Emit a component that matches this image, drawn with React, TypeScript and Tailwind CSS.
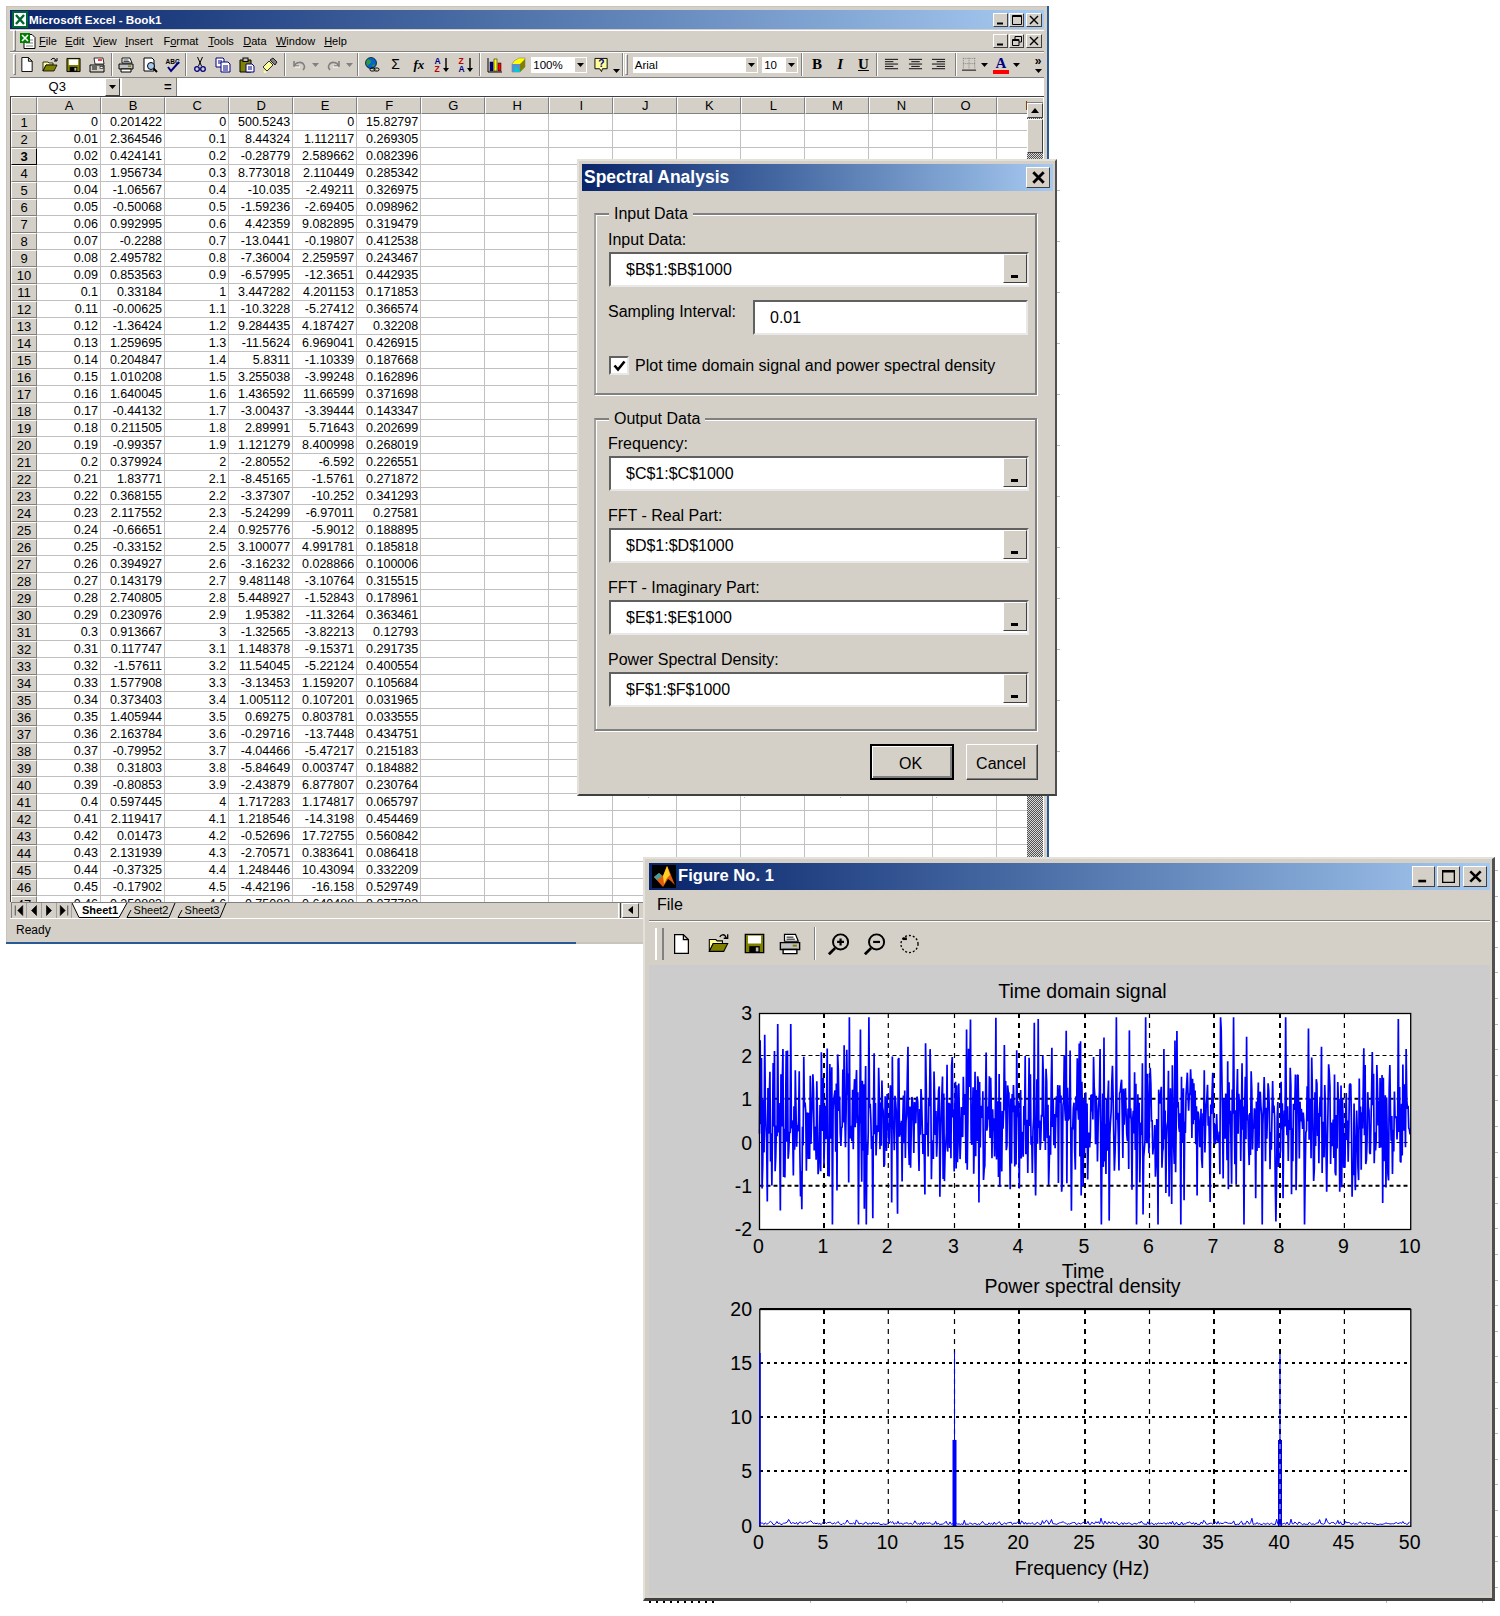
import React from "react";

const ROWS = `0 0.201422 0 500.5243 0 15.82797
0.01 2.364546 0.1 8.44324 1.112117 0.269305
0.02 0.424141 0.2 -0.28779 2.589662 0.082396
0.03 1.956734 0.3 8.773018 2.110449 0.285342
0.04 -1.06567 0.4 -10.035 -2.49211 0.326975
0.05 -0.50068 0.5 -1.59236 -2.69405 0.098962
0.06 0.992995 0.6 4.42359 9.082895 0.319479
0.07 -0.2288 0.7 -13.0441 -0.19807 0.412538
0.08 2.495782 0.8 -7.36004 2.259597 0.243467
0.09 0.853563 0.9 -6.57995 -12.3651 0.442935
0.1 0.33184 1 3.447282 4.201153 0.171853
0.11 -0.00625 1.1 -10.3228 -5.27412 0.366574
0.12 -1.36424 1.2 9.284435 4.187427 0.32208
0.13 1.259695 1.3 -11.5624 6.969041 0.426915
0.14 0.204847 1.4 5.8311 -1.10339 0.187668
0.15 1.010208 1.5 3.255038 -3.99248 0.162896
0.16 1.640045 1.6 1.436592 11.66599 0.371698
0.17 -0.44132 1.7 -3.00437 -3.39444 0.143347
0.18 0.211505 1.8 2.89991 5.71643 0.202699
0.19 -0.99357 1.9 1.121279 8.400998 0.268019
0.2 0.379924 2 -2.80552 -6.592 0.226551
0.21 1.83771 2.1 -8.45165 -1.5761 0.271872
0.22 0.368155 2.2 -3.37307 -10.252 0.341293
0.23 2.117552 2.3 -5.24299 -6.97011 0.27581
0.24 -0.66651 2.4 0.925776 -5.9012 0.188895
0.25 -0.33152 2.5 3.100077 4.991781 0.185818
0.26 0.394927 2.6 -3.16232 0.028866 0.100006
0.27 0.143179 2.7 9.481148 -3.10764 0.315515
0.28 2.740805 2.8 5.448927 -1.52843 0.178961
0.29 0.230976 2.9 1.95382 -11.3264 0.363461
0.3 0.913667 3 -1.32565 -3.82213 0.12793
0.31 0.117747 3.1 1.148378 -9.15371 0.291735
0.32 -1.57611 3.2 11.54045 -5.22124 0.400554
0.33 1.577908 3.3 -3.13453 1.159207 0.105684
0.34 0.373403 3.4 1.005112 0.107201 0.031965
0.35 1.405944 3.5 0.69275 0.803781 0.033555
0.36 2.163784 3.6 -0.29716 -13.7448 0.434751
0.37 -0.79952 3.7 -4.04466 -5.47217 0.215183
0.38 0.31803 3.8 -5.84649 0.003747 0.184882
0.39 -0.80853 3.9 -2.43879 6.877807 0.230764
0.4 0.597445 4 1.717283 1.174817 0.065797
0.41 2.119417 4.1 1.218546 -14.3198 0.454469
0.42 0.01473 4.2 -0.52696 17.72755 0.560842
0.43 2.131939 4.3 -2.70571 0.383641 0.086418
0.44 -0.37325 4.4 1.248446 10.43094 0.332209
0.45 -0.17902 4.5 -4.42196 -16.158 0.529749
0.46 0.250883 4.6 -0.75083 0.640488 0.077783`
  .split("\n")
  .map((r) => r.split(" "));

const COLS = ["A", "B", "C", "D", "E", "F", "G", "H", "I", "J", "K", "L", "M", "N", "O", "P"];

function rng(seed: number) {
  let a = seed;
  return () => {
    a |= 0;
    a = (a + 0x6d2b79f5) | 0;
    let t = Math.imul(a ^ (a >>> 15), 1 | a);
    t = (t + Math.imul(t ^ (t >>> 7), 61 | t)) ^ t;
    return ((t ^ (t >>> 14)) >>> 0) / 4294967296;
  };
}

const r1 = rng(1234);
const gauss = (r: () => number) => Math.sqrt(-2 * Math.log(r() + 1e-9)) * Math.cos(2 * Math.PI * r());
const signal = (() => {
  const pts: string[] = [];
  for (let i = 0; i < 1000; i++) {
    const t = i * 0.01;
    const amp = r1() < 0.55 ? 0.38 : 1.05;
    let v = 0.5 + 0.5 * Math.sin(2 * Math.PI * 15 * t) + 0.5 * Math.sin(2 * Math.PI * 40 * t) + gauss(r1) * amp;
    if (i < 47) v = Number(ROWS[i][1]);
    v = Math.max(-1.9, Math.min(2.9, v));
    pts.push(`${(759.5 + i * 0.6512).toFixed(2)},${(1142.5 - v * 43.2).toFixed(2)}`);
  }
  return pts.join(" ");
})();
const r2 = rng(77);
const psd = (() => {
  const pts: string[] = [];
  for (let i = 0; i < 500; i++) {
    const v = 0.12 + Math.abs(gauss(r2)) * 0.17;
    pts.push(`${(760 + i * 1.3014).toFixed(2)},${(1526 - v * 10.86).toFixed(2)}`);
  }
  return pts.join(" ");
})();

function WinBtn({ className, children }: { className: string; children: React.ReactNode }) {
  return (
    <div className={`flex items-center justify-center bg-[#d4d0c8] border border-t-white border-l-white border-r-[#404040] border-b-[#404040] ${className}`}>
      {children}
    </div>
  );
}
const GMin = ({ s = 10 }: { s?: number }) => (
  <svg width={s} height={s} viewBox="0 0 10 10"><rect x="1" y="7.5" width="6" height="2" fill="#000" /></svg>
);
const GMax = ({ s = 10 }: { s?: number }) => (
  <svg width={s} height={s} viewBox="0 0 10 10"><path d="M0.5 0.5h9v9h-9zM0.5 1.5h9" fill="none" stroke="#000" /></svg>
);
const GRestore = ({ s = 10 }: { s?: number }) => (
  <svg width={s} height={s} viewBox="0 0 10 10"><path d="M3 3V.5h6.5V6H7M.5 3.5H7v6H.5zM.5 4.5H7" fill="none" stroke="#000" /></svg>
);
const GClose = ({ s = 10, w = 1.6 }: { s?: number; w?: number }) => (
  <svg width={s} height={s} viewBox="0 0 10 10"><path d="M1 1l8 8M9 1l-8 8" stroke="#000" strokeWidth={w} /></svg>
);

const I = ({ w = 16, h = 16, vb = "0 0 16 16", children }: { w?: number; h?: number; vb?: string; children: React.ReactNode }) => (
  <svg width={w} height={h} viewBox={vb}>{children}</svg>
);
const IconNew = ({ w = 14, h = 16 }: { w?: number; h?: number }) => (
  <I w={w} h={h} vb="0 0 12 16"><path d="M.5.5h7l4 4v11H.5zM7.5.5v4h4" fill="#fff" stroke="#000" /></I>
);
const IconOpen = ({ w = 16, h = 16 }: { w?: number; h?: number }) => (
  <I w={w} h={h}>
    <path d="M1 5h5l1 1h4v2H4L1 14z" fill="#ffff99" stroke="#000" strokeWidth=".8" />
    <path d="M4 8h11l-3 6H1z" fill="#808000" stroke="#000" strokeWidth=".8" />
    <path d="M9 3c1-2 3-2 4-1l1 2M12 4h3V1" fill="none" stroke="#000" />
  </I>
);
const IconSave = ({ w = 15, h = 16 }: { w?: number; h?: number }) => (
  <I w={w} h={h}>
    <path d="M1 1h14v14H1z" fill="#808000" stroke="#000" />
    <rect x="3" y="2" width="10" height="6" fill="#fff" />
    <rect x="4" y="10" width="8" height="5" fill="#000" />
    <rect x="9" y="11" width="2" height="3" fill="#c0c0c0" />
  </I>
);
const IconMail = () => (
  <I>
    <path d="M5 1h9l1 6H6z" fill="#fff" stroke="#000" strokeWidth=".8" />
    <path d="M9 3h4" stroke="#f00" strokeWidth="1.5" />
    <path d="M1 8h14v7H1z" fill="#d4d0c8" stroke="#000" />
    <path d="M3 10h5M3 12h5" stroke="#000" />
    <rect x="11" y="9.5" width="3" height="2" fill="#fff" stroke="#000" strokeWidth=".6" />
  </I>
);
const IconPrint = ({ w = 16, h = 16 }: { w?: number; h?: number }) => (
  <I w={w} h={h}>
    <path d="M4 1h8l2 5H4z" fill="#fff" stroke="#000" strokeWidth=".9" />
    <path d="M5.5 3h5M5.5 4.5h6" stroke="#000" strokeWidth=".7" />
    <path d="M1 7h14v5H1z" fill="#c0c0c0" stroke="#000" />
    <path d="M3 12h10v3H3z" fill="#fff" stroke="#000" />
    <rect x="10" y="8.5" width="3" height="1.4" fill="#808000" />
  </I>
);
const IconPreview = () => (
  <I>
    <path d="M2 1h8l2 2v11H2z" fill="#fff" stroke="#000" />
    <circle cx="9" cy="9" r="3.5" fill="#a6caf0" stroke="#000" />
    <path d="M11.5 11.5l3.5 3.5" stroke="#000" strokeWidth="2" />
  </I>
);
const IconSpell = () => (
  <I>
    <text x="0.5" y="6.5" fontSize="6.5" fontWeight="700" fill="#000">ABC</text>
    <path d="M3 10l3 4 8-9" fill="none" stroke="#000080" strokeWidth="2" />
  </I>
);
const IconCut = () => (
  <I w={12} h={17} vb="0 0 12 17">
    <path d="M3.5 1l4 9M8.5 1l-4 9" stroke="#000" strokeWidth="1" />
    <circle cx="3" cy="13" r="2.3" fill="none" stroke="#000080" strokeWidth="1.3" />
    <circle cx="9" cy="13" r="2.3" fill="none" stroke="#000080" strokeWidth="1.3" />
  </I>
);
const IconCopy = () => (
  <I>
    <path d="M1 1h7l1 1v8H1z" fill="#fff" stroke="#000080" />
    <path d="M3 4h4M3 6h4" stroke="#000080" />
    <path d="M6 5h7l2 2v8H6z" fill="#fff" stroke="#000080" />
    <path d="M8 9h5M8 11h5M8 13h5" stroke="#000080" />
  </I>
);
const IconPaste = () => (
  <I>
    <path d="M1 3h11v12H1z" fill="#808000" stroke="#000" />
    <rect x="4" y="1" width="5" height="3.5" fill="#c0c0c0" stroke="#000" />
    <path d="M7 7h6l2 2v6H7z" fill="#fff" stroke="#000080" />
    <path d="M9 10h4M9 12h4" stroke="#000080" />
  </I>
);
const IconPainter = () => (
  <I>
    <path d="M1 10l6-6 4 4-6 6z" fill="#ffff99" stroke="#000" strokeWidth=".8" />
    <path d="M8 3l3-2 4 4-2 3z" fill="#808080" stroke="#000" strokeWidth=".8" />
    <path d="M2 14l2 2" stroke="#ffff99" strokeWidth="2" />
  </I>
);
const IconUndo = ({ flip }: { flip?: boolean }) => (
  <I w={13} h={12} vb="0 0 13 12">
    <g transform={flip ? "matrix(-1 0 0 1 13 0)" : undefined}>
      <path d="M1 2v5h5M1.5 6.5C3 3 9 2 11 6c1 2 0 4-1 5" fill="none" stroke="#808080" strokeWidth="1.6" />
      <path d="M2 8h5" stroke="#fff" />
    </g>
  </I>
);
const IconGlobe = () => (
  <I>
    <circle cx="7" cy="6" r="5.5" fill="#0066cc" stroke="#000" strokeWidth=".7" />
    <path d="M3 3c2-1 4 0 4 2s-3 2-3 4c-2-1-2-4-1-6zM8 8c2-1 3-1 3 0l-2 2z" fill="#339933" />
    <rect x="6" y="11" width="5" height="3" rx="1.5" fill="none" stroke="#000" />
    <rect x="10" y="11" width="5" height="3" rx="1.5" fill="none" stroke="#000" />
  </I>
);
const IconSort = ({ top, bottom, c1, c2 }: { top: string; bottom: string; c1: string; c2: string }) => (
  <I>
    <text x="0.5" y="7" fontSize="8.5" fontWeight="700" fill={c1}>{top}</text>
    <text x="0.5" y="15" fontSize="8.5" fontWeight="700" fill={c2}>{bottom}</text>
    <path d="M12 1v11" stroke="#000" strokeWidth="1.4" />
    <path d="M9 11h6l-3 4z" fill="#000" />
  </I>
);
const IconChart = () => (
  <I>
    <path d="M1 1v14h14" fill="none" stroke="#000" />
    <rect x="3" y="5" width="3" height="9" fill="#000080" stroke="#000" strokeWidth=".5" />
    <rect x="7" y="2" width="3" height="12" fill="#ffff00" stroke="#000" strokeWidth=".5" />
    <rect x="11" y="6" width="3" height="8" fill="#ff0000" stroke="#000" strokeWidth=".5" />
  </I>
);
const IconMap = () => (
  <I>
    <path d="M4 4l5-3h6v9l-5 5H2V7z" fill="#ffff00" stroke="#808080" strokeWidth=".6" />
    <path d="M2 7h8v8H2z" fill="#5a8fd0" />
    <path d="M10 7l5-5v8l-5 5z" fill="#808000" />
    <path d="M5 9l6 6H4z" fill="#00cccc" />
  </I>
);
const IconHelp = () => (
  <I w={15} h={16}>
    <path d="M1 1h13v11H9l-1 3-2-3H1z" fill="#ffff99" stroke="#000" />
    <text x="4.5" y="10.5" fontSize="11" fontWeight="700" fill="#000080">?</text>
  </I>
);
const Align = ({ kind }: { kind: "l" | "c" | "r" }) => {
  const d = kind === "l"
    ? "M1 2.5h14M1 5h9M1 7.5h14M1 10h9M1 12.5h14"
    : kind === "c"
    ? "M1 2.5h14M3.5 5h9M1 7.5h14M3.5 10h9M1 12.5h14"
    : "M1 2.5h14M6 5h9M1 7.5h14M6 10h9M1 12.5h14";
  return <I w={15} h={15}><path d={d} stroke="#000" strokeWidth="1" /></I>;
};
const Arrow = ({ c = "#000" }: { c?: string }) => (
  <svg width="7" height="4" viewBox="0 0 7 4"><path d="M0 0h7L3.5 4z" fill={c} /></svg>
);

const Sep = ({ className }: { className: string }) => (
  <div className={`flex justify-center ${className}`}>
    <div className="w-[2px] h-[23px] border-l border-l-[#808080] border-r border-r-white" />
  </div>
);
const Grip = ({ className }: { className: string }) => (
  <div className={`h-[21px] w-[3px] border border-t-white border-l-white border-r-[#808080] border-b-[#808080] ${className}`} />
);
const Btn = ({ className, children }: { className: string; children: React.ReactNode }) => (
  <div className={`flex items-center justify-center h-[22px] ${className}`}>{children}</div>
);
const Combo = ({ className, text }: { className: string; text: string }) => (
  <div className={`flex items-center justify-between h-[16px] bg-white pl-[2px] text-[11.5px] leading-[16px] ${className}`}>
    <span>{text}</span>
    <div className="flex items-center justify-center h-[14px] w-[11px] mr-[1px] bg-[#d4d0c8]"><Arrow /></div>
  </div>
);

const MENU: [string, string][] = [
  ["File", "w-[26.2px]"],
  ["Edit", "w-[27.9px]"],
  ["View", "w-[32px]"],
  ["Insert", "w-[38.3px]"],
  ["Format", "w-[44.7px]"],
  ["Tools", "w-[35.1px]"],
  ["Data", "w-[32.7px]"],
  ["Window", "w-[48.2px]"],
  ["Help", "w-[30px]"],
];

function MenuLabel({ label }: { label: string }) {
  const idx = label === "Format" ? 1 : 0;
  return (
    <span>
      {label.slice(0, idx)}
      <u>{label[idx]}</u>
      {label.slice(idx + 1)}
    </span>
  );
}

function ExcelIcon() {
  return (
    <svg width="16" height="17" viewBox="0 0 16 17">
      <rect width="16" height="17" fill="#006633" />
      <rect x="2" y="2" width="12" height="13" fill="#fff" />
      <path d="M4 4l8 9M12 4l-8 9" stroke="#006633" strokeWidth="2.4" />
    </svg>
  );
}
function SheetIcon() {
  return (
    <svg width="17" height="17" viewBox="0 0 17 17">
      <path d="M5 2.5h8l3 3v11H5z" fill="#fff" stroke="#000" />
      <path d="M7 8h7M7 11h7M7 14h7" stroke="#808080" />
      <rect x="1" y="1" width="10" height="10" fill="#008000" />
      <path d="M3 3l6 6M9 3l-6 6" stroke="#fff" strokeWidth="1.6" />
    </svg>
  );
}

function Excel() {
  return (
    <div className="absolute left-[6px] top-[6px] w-[1043px] h-[937.5px] bg-[#d4d0c8] border-l border-t border-l-[#c8c4bc] border-t-[#c8c4bc] pl-[3px] pt-[3px] flex flex-col">
      <div className="w-[1034px] h-[19px] shrink-0 flex items-center bg-linear-to-r from-[#0a246a] to-[#a6caf0] pl-[2px]">
        <ExcelIcon />
        <span className="ml-[1px] mt-[-1px] text-white font-bold text-[11.7px] leading-[19px]">Microsoft Excel - Book1</span>
        <div className="ml-auto flex items-center mr-[2px]">
          <WinBtn className="w-[15px] h-[14px]"><GMin s={10} /></WinBtn>
          <WinBtn className="w-[15px] h-[14px] ml-[1px]"><GMax s={10} /></WinBtn>
          <WinBtn className="w-[16px] h-[14px] ml-[2px]"><GClose s={10} w={1.4} /></WinBtn>
        </div>
      </div>
      <div className="w-[1034px] h-[21.5px] shrink-0 mt-[1px] flex items-center border-t border-t-white border-b border-b-[#808080] text-[11px] leading-[20px]">
        <Grip className="ml-[3px]" />
        <div className="ml-[3px] w-[18.6px]"><SheetIcon /></div>
        <div className="flex ml-[1.5px]">
          {MENU.map(([l, w]) => (
            <div key={l} className={w}><MenuLabel label={l} /></div>
          ))}
        </div>
        <div className="ml-auto flex items-center mr-[2px]">
          <WinBtn className="w-[15px] h-[14px]"><GMin s={10} /></WinBtn>
          <WinBtn className="w-[15px] h-[14px] ml-[1px]"><GRestore s={10} /></WinBtn>
          <WinBtn className="w-[16px] h-[14px] ml-[2px]"><GClose s={10} w={1.4} /></WinBtn>
        </div>
      </div>
      <div className="w-[1034px] h-[26px] shrink-0 flex items-center border-t border-t-white border-b border-b-[#808080]">
        <Grip className="ml-[3px]" />
        <Btn className="ml-[-0.6px] w-[23.3px]"><IconNew w={12} h={15} /></Btn>
        <Btn className="w-[23.3px]"><IconOpen /></Btn>
        <Btn className="w-[23.3px]"><IconSave /></Btn>
        <Btn className="w-[23.3px]"><IconMail /></Btn>
        <Sep className="w-[6px]" />
        <Btn className="w-[23.3px]"><IconPrint /></Btn>
        <Btn className="w-[23.3px]"><IconPreview /></Btn>
        <Btn className="w-[23.3px]"><IconSpell /></Btn>
        <Sep className="w-[4px]" />
        <Btn className="w-[23.3px]"><IconCut /></Btn>
        <Btn className="w-[23.3px]"><IconCopy /></Btn>
        <Btn className="w-[23.3px]"><IconPaste /></Btn>
        <Btn className="w-[23.3px]"><IconPainter /></Btn>
        <Sep className="w-[6px]" />
        <Btn className="w-[23px]"><IconUndo /></Btn>
        <Btn className="w-[10px]"><Arrow c="#808080" /></Btn>
        <Btn className="ml-[1px] w-[23px]"><IconUndo flip /></Btn>
        <Btn className="w-[10px]"><Arrow c="#808080" /></Btn>
        <Sep className="w-[6px]" />
        <Btn className="w-[23.3px]"><IconGlobe /></Btn>
        <Btn className="w-[23.3px] text-[14px]">Σ</Btn>
        <Btn className="w-[23.3px] text-[13px] font-bold italic [font-family:'Liberation_Serif',serif]">fx</Btn>
        <Btn className="w-[23.3px]"><IconSort top="A" bottom="Z" c1="#000080" c2="#c00000" /></Btn>
        <Btn className="w-[23.3px]"><IconSort top="Z" bottom="A" c1="#c00000" c2="#000080" /></Btn>
        <Sep className="w-[6px]" />
        <Btn className="w-[23.3px]"><IconChart /></Btn>
        <Btn className="w-[23.3px]"><IconMap /></Btn>
        <Combo className="ml-[1.5px] w-[56px]" text="100%" />
        <Btn className="ml-[3px] w-[22px]"><IconHelp /></Btn>
        <Btn className="w-[9px] items-end pb-[3px]"><Arrow /></Btn>
        <Sep className="ml-[-1px] w-[6px]" />
        <Grip className="ml-[-1px]" />
        <Combo className="ml-[4.5px] w-[125.4px]" text="Arial" />
        <Combo className="ml-[4px] w-[35.6px]" text="10" />
        <Sep className="ml-[1.5px] w-[6px]" />
        <Btn className="w-[23.3px] text-[15px] font-bold [font-family:'Liberation_Serif',serif]">B</Btn>
        <Btn className="w-[23.3px] text-[15px] font-bold italic [font-family:'Liberation_Serif',serif]">I</Btn>
        <Btn className="w-[23.3px] text-[15px] font-bold underline [font-family:'Liberation_Serif',serif]">U</Btn>
        <Sep className="ml-[-1px] w-[6px]" />
        <Btn className="w-[23.3px]"><Align kind="l" /></Btn>
        <Btn className="w-[23.3px]"><Align kind="c" /></Btn>
        <Btn className="w-[23.3px]"><Align kind="r" /></Btn>
        <Sep className="ml-[3px] w-[6px]" />
        <Btn className="w-[20px]">
          <I w={15} h={15}><path d="M1 1.5h13M1 7h13M1.5 1v11M7.5 1v11M13.5 1v11" stroke="#808080" strokeDasharray="1 1" /><path d="M0 14h15" stroke="#000" /></I>
        </Btn>
        <Btn className="w-[10px]"><Arrow /></Btn>
        <Btn className="ml-[2px] w-[20px]">
          <div className="flex flex-col items-center">
            <span className="text-[15px] leading-[14px] font-bold text-[#000080] [font-family:'Liberation_Serif',serif]">A</span>
            <div className="w-[16px] h-[4px] bg-[#ff0000]" />
          </div>
        </Btn>
        <Btn className="w-[10px]"><Arrow /></Btn>
        <div className="ml-[12px] flex flex-col items-center w-[10px] text-[12px] leading-[10px] font-bold">
          <span>»</span>
          <div className="mt-[3px]"><Arrow /></div>
        </div>
      </div>
      <div className="w-[1034px] h-[18px] shrink-0 flex bg-white text-[13px] leading-[18px]">
        <div className="w-[94.5px] text-center">Q3</div>
        <div className="w-[15.5px] flex items-center justify-center bg-[#d4d0c8] border border-t-white border-l-white border-r-[#404040] border-b-[#404040]"><Arrow /></div>
        <div className="ml-[1.5px] w-[55px] bg-[#d4d0c8] text-right pr-[4px] border-r border-r-[#808080] font-bold">=</div>
      </div>
      <div className="w-[1034px] h-[806px] shrink-0 flex border-t border-t-[#404040] border-l border-l-[#404040] overflow-hidden bg-white">
        <div className="w-[1016px] overflow-hidden text-[12.5px] leading-[16px]">
          <div className="flex h-[17.3px]">
            <div className="w-[26px] shrink-0 bg-[#d4d0c8] border border-t-white border-l-white border-r-[#808080] border-b-[#808080]" />
            {COLS.map((c) => (
              <div key={c} className="w-[64.04px] shrink-0 bg-[#d4d0c8] text-center text-[13px] border-t border-t-white border-l border-l-white border-r border-r-[#808080] border-b border-b-[#808080]">{c}</div>
            ))}
          </div>
          {ROWS.map((r, i) => (
            <div key={i} className="flex h-[17px]">
              {i === 2 ? (
                <div className="w-[26px] shrink-0 bg-[#d4d0c8] text-center text-[13px] font-bold border border-t-white border-l-white border-r-[#000] border-b-[#000]">{i + 1}</div>
              ) : (
                <div className="w-[26px] shrink-0 bg-[#d4d0c8] text-center text-[13px] border border-t-white border-l-white border-r-[#808080] border-b-[#808080]">{i + 1}</div>
              )}
              {COLS.map((c, j) => (
                <div key={c} className="w-[64.04px] shrink-0 text-right pr-[2px] border-r border-b border-r-[#c0c0c0] border-b-[#c0c0c0]">{r[j] ?? ""}</div>
              ))}
            </div>
          ))}
        </div>
        <div className="w-[16px] flex flex-col bg-[repeating-conic-gradient(#505050_0_25%,#d8d8d8_0_50%)] bg-[length:2px_2px]">
          <div className="h-[6px] bg-[#d4d0c8] border-t border-t-white border-b border-b-[#808080]" />
          <WinBtn className="h-[15px]"><svg width="8" height="5" viewBox="0 0 8 5"><path d="M4 0l4 5H0z" fill="#000" /></svg></WinBtn>
          <WinBtn className="h-[34px] mt-[1px]"><span /></WinBtn>
        </div>
      </div>
      <div className="w-[1034px] h-[16px] shrink-0 flex items-stretch bg-[#d4d0c8] ml-[1px] text-[11px] leading-[14px] border-t border-t-[#808080]">
        <div className="flex items-stretch border-l border-l-[#808080] h-[15px]">
          {["M1 0v8M7 0L3 4l4 4z", "M6 0L2 4l4 4z", "M2 0l4 4-4 4z", "M7 0v8M1 0l4 4-4 4z"].map((d, i) => (
            <div key={i} className="w-[15px] flex items-center justify-center border-r border-r-[#a0a0a0]">
              <svg width="10" height="11" viewBox="0 0 8 8"><path d={d} fill="#000" stroke="#000" strokeWidth=".5" /></svg>
            </div>
          ))}
        </div>
        <div className="relative w-[56px] h-[15px] ml-[0px] text-center font-bold leading-[14px]">
          <svg className="absolute inset-0" width="56" height="15" viewBox="0 0 56 15"><path d="M0 0L7 14.5H47L55 0" fill="#fff" stroke="#000" /></svg>
          <span className="relative">Sheet1</span>
        </div>
        <div className="relative w-[50px] h-[15px] ml-[-2px] text-center">
          <svg className="absolute inset-0" width="50" height="15" viewBox="0 0 50 15"><path d="M5 7L1 14.5H43L49 0" fill="none" stroke="#000" /></svg>
          <span className="relative">Sheet2</span>
        </div>
        <div className="relative w-[50px] h-[15px] ml-[1px] text-center">
          <svg className="absolute inset-0" width="50" height="15" viewBox="0 0 50 15"><path d="M5 7L1 14.5H43L49 0" fill="none" stroke="#000" /></svg>
          <span className="relative">Sheet3</span>
        </div>
        <div className="ml-[391px] w-[3px] border-l border-l-white border-r border-r-[#404040]" />
        <WinBtn className="ml-[1px] w-[17px] h-[15px]"><svg width="5" height="8" viewBox="0 0 5 8"><path d="M5 0L0 4l5 4z" fill="#000" /></svg></WinBtn>
      </div>
      <div className="w-[1034px] h-[24px] shrink-0 border-t border-t-white pl-[6px] text-[12px] leading-[22px]">Ready</div>
      <div className="ml-[-4px] mt-auto h-[2px] w-[1043px] flex shrink-0">
        <div className="w-[570px] bg-[#2a5a96]" />
        <div className="flex-1 bg-[#c8c4bc]" />
      </div>
      <div className="absolute left-[1040px] top-[-1px] w-[2px] h-[938px] bg-[#2a5a96]" />
    </div>
  );
}

function Sunken({ className, children }: { className: string; children: React.ReactNode }) {
  return (
    <div className={`flex items-stretch h-[35px] bg-white border-2 border-t-[#606060] border-l-[#606060] border-b-[#e8e8e8] border-r-[#e8e8e8] text-[16px] leading-[29px] ${className}`}>
      {children}
    </div>
  );
}
function RefField({ value }: { value: string }) {
  return (
    <Sunken className="w-[420px]">
      <span className="pl-[15px] pt-[0.5px]">{value}</span>
      <div className="ml-auto w-[24px] h-[29px] flex items-end justify-center pb-[4px] pr-[1px] bg-[#d4d0c8] border border-t-white border-l-white border-r-[#404040] border-b-[#404040]">
        <div className="w-[7px] h-[3px] bg-black" />
      </div>
    </Sunken>
  );
}
function Group({ title, className, children }: { title: string; className: string; children: React.ReactNode }) {
  return (
    <div className={`relative w-[443px] border-2 border-[#808080] border-l-[#a0a0a0] shadow-[1px_1px_0_#fff,inset_1px_1px_0_#fff] pl-[13px] ${className}`}>
      <span className="absolute left-[13px] top-[-11px] px-[5px] bg-[#d4d0c8] text-[16px] leading-[20px]">{title}</span>
      {children}
    </div>
  );
}
const Label = ({ children }: { children: string }) => <div className="h-[20px] ml-[-1px] pt-[1px] text-[16px] leading-[20px]">{children}</div>;

function Dialog() {
  return (
    <div className="absolute left-[577px] top-[159px] w-[480px] h-[637px] bg-[#d4d0c8] border-t-2 border-l-2 border-t-[#e4e1da] border-l-[#e4e1da] border-r-[2px] border-b-[2px] border-r-[#505050] border-b-[#404040] pl-[3px] pr-[2px] pt-[3px]">
      <div className="h-[27px] flex items-center bg-linear-to-r from-[#0a246a] to-[#a6caf0] pl-[2px] text-white font-bold text-[17.5px]">
        <span>Spectral Analysis</span>
        <WinBtn className="ml-auto mr-[3px] w-[24px] h-[21px]"><GClose s={13} w={2.2} /></WinBtn>
      </div>
      <Group title="Input Data" className="mt-[22px] ml-[12px] h-[182px] pt-[14px]">
        <Label>Input Data:</Label>
        <div className="h-[3px]" />
        <RefField value="$B$1:$B$1000" />
        <div className="mt-[13px] flex">
          <div className="w-[145px] ml-[-1px] pt-[2px] text-[16px] leading-[20px]">Sampling Interval:</div>
          <Sunken className="w-[275px]"><span className="pl-[15px] pt-[1px]">0.01</span></Sunken>
        </div>
        <div className="mt-[21px] flex items-center h-[19px]">
          <div className="w-[20px] h-[19px] bg-white border-2 border-t-[#606060] border-l-[#606060] border-b-[#e8e8e8] border-r-[#e8e8e8] flex items-center justify-center">
            <svg width="13" height="12" viewBox="0 0 13 12"><path d="M1.5 5.5l3.5 4 6.5-8" fill="none" stroke="#000" strokeWidth="2.6" /></svg>
          </div>
          <span className="ml-[6px] mt-[1px] text-[16px] leading-[20px]">Plot time domain signal and power spectral density</span>
        </div>
      </Group>
      <Group title="Output Data" className="mt-[23px] ml-[12px] h-[313px] pt-[13px]">
        {[
          ["Frequency:", "$C$1:$C$1000"],
          ["FFT - Real Part:", "$D$1:$D$1000"],
          ["FFT - Imaginary Part:", "$E$1:$E$1000"],
          ["Power Spectral Density:", "$F$1:$F$1000"],
        ].map(([l, v]) => (
          <div key={l} className="h-[72px]">
            <Label>{l}</Label>
            <div className="h-[3.2px]" />
            <RefField value={v} />
          </div>
        ))}
      </Group>
      <div className="mt-[13px] flex text-[16px]">
        <div className="ml-[288px] w-[84px] h-[36px] flex items-center justify-center pt-[3px] pr-[3px] bg-[#d4d0c8] border-2 border-black shadow-[inset_1px_1px_0_#fff,inset_-2px_-2px_0_#808080]">OK</div>
        <div className="ml-[12px] w-[72px] h-[36px] flex items-center justify-center pt-[3px] pr-[2px] bg-[#d4d0c8] border border-t-white border-l-white border-r-[#404040] border-b-[#404040] shadow-[inset_-1px_-1px_0_#808080]">Cancel</div>
      </div>
    </div>
  );
}

function MatlabIcon() {
  return (
    <svg width="24" height="23" viewBox="0 0 24 23">
      <rect width="24" height="23" fill="#000" />
      <path d="M2 12l5-4 4 3 4-10c2 3 5 12 8 19-3-3-5-5-7-6l-5 8z" fill="#e05a10" />
      <path d="M11 11l4-10c1 2 2 6 3 9l-3 3-3 6z" fill="#ffd020" />
      <path d="M2 12l5-4 3 3-5 4z" fill="#40a0a0" />
    </svg>
  );
}

const XS = [759.5, 824, 888.3, 954.5, 1019, 1085, 1149.5, 1214, 1280, 1344.4, 1410.7];
const THICK = [false, true, false, false, true, true, false, true, true, false, false];

function Chart() {
  return (
    <svg className="block" width="841" height="630" viewBox="649 965 841 630">
      <text x="1082.5" y="998" fontSize="19.5" textAnchor="middle">Time domain signal</text>
      <rect x="759.5" y="1013.5" width="651.2" height="216" fill="#fff" />
      {XS.slice(1, 10).map((x, i) => (
        <line key={x} x1={x} x2={x} y1={1013} y2={1229} stroke="#000" strokeWidth={THICK[i + 1] ? 2 : 1.2} strokeDasharray="5 5" />
      ))}
      {[1055.5, 1098.7, 1142.5, 1185.7].map((y, i) => (
        <line key={y} x1={759.5} x2={1410.7} y1={y} y2={y} stroke="#000" strokeWidth={i % 2 ? 2 : 1.2} strokeDasharray="4 3" />
      ))}
      <polyline points={signal} fill="none" stroke="#0000ff" strokeWidth="1.7" strokeLinejoin="bevel" />
      <rect x="759.5" y="1013.5" width="651.2" height="216" fill="none" stroke="#000" strokeWidth="1.3" />
      {[["3", 1013], ["2", 1055.5], ["1", 1098.7], ["0", 1142.5], ["-1", 1185.7], ["-2", 1229]].map(([t, y]) => (
        <text key={t} x="752" y={Number(y) + 7} fontSize="19.5" textAnchor="end">{t}</text>
      ))}
      {XS.map((x, i) => (
        <text key={i} x={x - 1} y="1252.5" fontSize="19.5" textAnchor="middle">{i}</text>
      ))}
      <text x="1083" y="1278" fontSize="19.5" textAnchor="middle">Time</text>
      <text x="1082.5" y="1292.5" fontSize="19.5" textAnchor="middle">Power spectral density</text>

      <rect x="759.8" y="1309" width="651" height="217.3" fill="#fff" />
      {XS.slice(1, 10).map((x, i) => (
        <line key={x} x1={x} x2={x} y1={1309} y2={1526} stroke="#000" strokeWidth={THICK[i + 1] ? 2 : 1.2} strokeDasharray="5 5" />
      ))}
      {[1363, 1417, 1471].map((y) => (
        <line key={y} x1={760} x2={1410.7} y1={y} y2={y} stroke="#000" strokeWidth="2" strokeDasharray="3 4" />
      ))}
      <polyline points={psd} fill="none" stroke="#0000ff" strokeWidth="1" />
      <line x1="954.5" x2="954.5" y1="1352" y2="1526" stroke="#0000ff" strokeWidth="1" />
      <rect x="952.5" y="1440" width="4" height="86" fill="#0000ff" />
      <line x1="1280" x2="1280" y1="1354" y2="1526" stroke="#0000ff" strokeWidth="1.2" />
      <path d="M1278.5 1440v86M1281.5 1440v86" stroke="#0000ff" strokeWidth="1" />
      <rect x="759.8" y="1309.5" width="651" height="216.8" fill="none" stroke="#000" strokeWidth="1.3" />
      <line x1="759.8" x2="1410.7" y1="1309" y2="1309" stroke="#000" strokeWidth="2" />
      <line x1="760" x2="760" y1="1353" y2="1526" stroke="#0000ff" strokeWidth="1.4" />
      {[["20", 1309], ["15", 1363], ["10", 1417], ["5", 1471], ["0", 1526]].map(([t, y]) => (
        <text key={t} x="752" y={Number(y) + 7} fontSize="19.5" textAnchor="end">{t}</text>
      ))}
      {XS.map((x, i) => (
        <text key={i} x={x - 1} y="1548.5" fontSize="19.5" textAnchor="middle">{i * 5}</text>
      ))}
      <text x="1082" y="1574.5" fontSize="19.5" textAnchor="middle">Frequency (Hz)</text>
    </svg>
  );
}

function Figure() {
  return (
    <div className="absolute left-[643px] top-[857px] w-[852px] h-[744px] bg-[#d4d0c8] border-l-2 border-t-2 border-l-[#e4e1da] border-t-[#e4e1da] border-r-[3px] border-r-[#505050] border-b-[3px] border-b-[#404040] pl-[4px] pt-[4px] flex flex-col">
      <div className="w-[841px] h-[27px] shrink-0 flex items-center bg-linear-to-r from-[#0a246a] to-[#a6caf0] pl-[3px] text-white font-bold text-[16.6px]">
        <MatlabIcon />
        <span className="ml-[2px]">Figure No. 1</span>
        <div className="ml-auto mr-[3px] flex">
          <WinBtn className="w-[23px] h-[21px]"><GMin s={13} /></WinBtn>
          <WinBtn className="ml-[2px] w-[23px] h-[21px]"><GMax s={13} /></WinBtn>
          <WinBtn className="ml-[3px] w-[24px] h-[21px]"><GClose s={13} w={2} /></WinBtn>
        </div>
      </div>
      <div className="w-[841px] h-[30px] shrink-0 pl-[8px] text-[16px] leading-[30px]">File</div>
      <div className="w-[841px] h-[2px] shrink-0 border-t border-t-[#808080] border-b border-b-white" />
      <div className="w-[841px] h-[43px] shrink-0 flex items-center">
        <div className="ml-[6px] w-[9px] h-[32px] bg-[#d4d0c8] border-l-2 border-l-white border-r-2 border-r-[#808080]" />
        <div className="ml-[9px] w-[33px]"><IconNew w={17} h={20} /></div>
        <div className="w-[38px]"><IconOpen w={25} h={21} /></div>
        <div className="w-[34px]"><IconSave w={21} h={21} /></div>
        <div className="w-[36px]"><IconPrint w={24} h={22} /></div>
        <div className="w-[2px] h-[33px] border-l border-l-[#808080] border-r border-r-white" />
        <div className="ml-[11px] w-[35px]">
          <I w={23} h={22}>
            <circle cx="9.5" cy="6.5" r="5.5" fill="none" stroke="#000" strokeWidth="1.4" />
            <path d="M7 6.5h5M9.5 4v5" stroke="#000" strokeWidth="1.6" />
            <path d="M5.5 11L1 15.5" stroke="#000" strokeWidth="2" />
          </I>
        </div>
        <div className="ml-[1px] w-[36px]">
          <I w={23} h={22}>
            <circle cx="9.5" cy="6.5" r="5.5" fill="none" stroke="#000" strokeWidth="1.4" />
            <path d="M7 6.5h5" stroke="#000" strokeWidth="1.6" />
            <path d="M5.5 11L1 15.5" stroke="#000" strokeWidth="2" />
          </I>
        </div>
        <div>
          <I w={21} h={22}>
            <circle cx="8" cy="8" r="6.5" fill="none" stroke="#000" strokeWidth="1" strokeDasharray="1.5 1.5" />
            <path d="M3 3h3v2H3z" fill="#000" />
          </I>
        </div>
      </div>
      <div className="w-[841px] h-[630px] shrink-0 bg-[#cccccc]">
        <Chart />
      </div>
    </div>
  );
}

export default function App() {
  return (
    <div className="relative w-[1500px] h-[1616px] overflow-hidden bg-white text-black [font-family:'Liberation_Sans',Arial,sans-serif]">
      <Excel />
      <div className="absolute left-[1057px] top-[190px] w-[3px] h-[570px] bg-[repeating-linear-gradient(#b8b8b8_0_1px,transparent_1px_51px)]" />
      <div className="absolute left-[648px] top-[797px] w-[300px] h-[1px] bg-[repeating-linear-gradient(90deg,#b8b8b8_0_1px,transparent_1px_96px)]" />
      <div className="absolute left-[1495px] top-[870px] w-[3px] h-[720px] bg-[repeating-linear-gradient(#b8b8b8_0_1px,transparent_1px_25.6px)]" />
      <div className="absolute left-[810px] top-[1601px] w-[680px] h-[2px] bg-[repeating-linear-gradient(90deg,#b8b8b8_0_1px,transparent_1px_96px)]" />
      <div className="absolute left-[649px] top-[1601px] w-[66px] h-[2px] bg-[repeating-linear-gradient(90deg,#000_0_2px,transparent_2px_7px)]" />
      <Dialog />
      <Figure />
    </div>
  );
}
